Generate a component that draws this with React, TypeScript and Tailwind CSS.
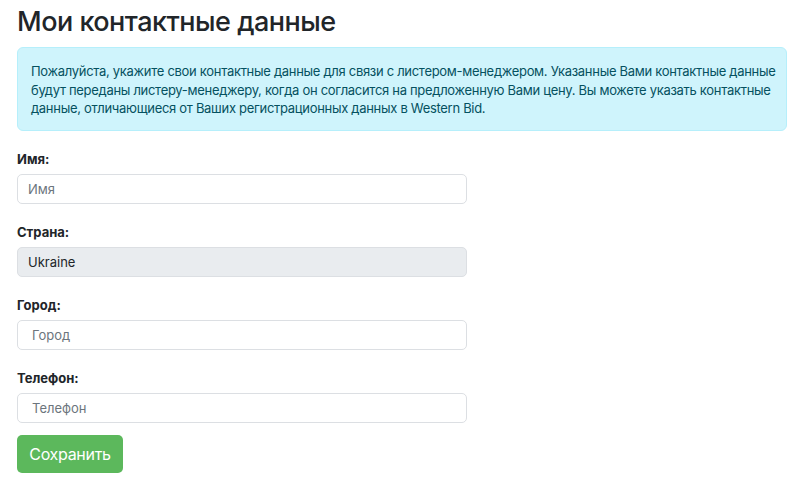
import * as React from 'react';

const fields = [
  { label: 'Имя:', placeholder: 'Имя', pad: 'px-[10px]' },
  { label: 'Страна:', value: 'Ukraine', disabled: true, pad: 'px-[10px]' },
  { label: 'Город:', placeholder: 'Город', pad: 'px-[14px]' },
  { label: 'Телефон:', placeholder: 'Телефон', pad: 'px-[14px]' },
];

export default function App() {
  return (
    <div className="min-h-[489px] bg-white px-[17px] pt-[4px] font-['Inter','Noto_Sans',sans-serif] text-[#212529]">
      <h1 className="text-[27px] font-medium leading-[36px] tracking-[-0.5px]">
        Мои контактные данные
      </h1>

      <div className="mt-[7px] w-[770px] whitespace-nowrap rounded-[6px] border border-[#b6effb] bg-[#cff4fc] px-[13px] pt-[14px] pb-[12px] text-[13px] leading-[18.5px] tracking-[-0.3px] text-[#055160]">
        Пожалуйста, укажите свои контактные данные для связи с листером-менеджером. Указанные Вами контактные данные
        <br />
        будут переданы листеру-менеджеру, когда он согласится на предложенную Вами цену. Вы можете указать контактные
        <br />
        данные, отличающиеся от Ваших регистрационных данных в Western Bid.
      </div>

      <form className="mt-[19px] flex flex-col">
        {fields.map((f) => (
          <div key={f.label} className="mb-[19px] flex flex-col">
            <label className="text-[13px] font-bold leading-[18px]">{f.label}</label>
            <input
              className={
                'mt-[6px] h-[30px] w-[450px] rounded-[5px] border border-[#dcdfe3] text-[13px] text-[#212529] outline-none placeholder:text-[#6c757d] ' +
                f.pad +
                (f.disabled ? ' bg-[#e9ecef]' : ' bg-white')
              }
              placeholder={f.placeholder}
              defaultValue={f.value}
              disabled={f.disabled}
            />
          </div>
        ))}
        <button
          type="button"
          className="-mt-[7px] h-[38px] w-[106px] rounded-[5px] bg-[#5cb85c] text-[16px] tracking-[-0.3px] text-white"
        >
          Сохранить
        </button>
      </form>
    </div>
  );
}
